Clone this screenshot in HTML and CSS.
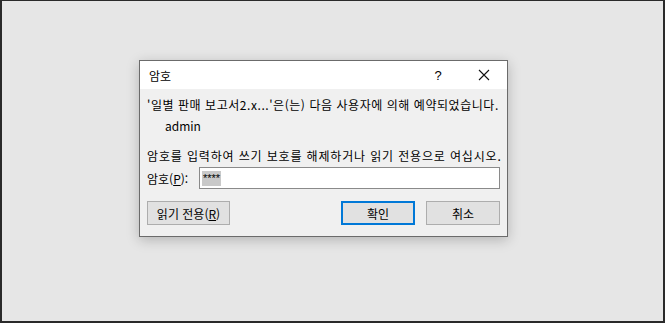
FILE: index.html
```html
<!DOCTYPE html>
<html lang="ko">
<head>
    <meta charset="UTF-8">
    <title>암호</title>
    <link rel="stylesheet" href="styles.css">
</head>
<body>
    <div class="dialog">
        <div class="titlebar">
            <span class="title">암호</span>
            <span class="help">?</span>
            <span class="close">
                <svg width="12" height="12" viewBox="0 0 12 12"><path d="M1 1L11 11M11 1L1 11" stroke="#111" stroke-width="1.1" fill="none"/></svg>
            </span>
        </div>
        <div class="content">
            <div class="line notice">'일별 판매 보고서2.x...'은(는) 다음 사용자에 의해 예약되었습니다.</div>
            <div class="line user">admin</div>
            <div class="line prompt">암호를 입력하여 쓰기 보호를 해제하거나 읽기 전용으로 여십시오.</div>
            <div class="pw-row">
                <label class="pw-label">암호(<u>P</u>):</label>
                <div class="pw-field"><span class="sel">****</span></div>
            </div>
            <div class="buttons">
                <button class="btn wide">읽기 전용(<u>R</u>)</button>
                <div class="spacer"></div>
                <button class="btn default">확인</button>
                <button class="btn">취소</button>
            </div>
        </div>
    </div>
</body>
</html>
```

FILE: styles.css
```css
html, body {
    margin: 0;
    padding: 0;
}

body {
    width: 665px;
    height: 323px;
    box-sizing: border-box;
    background-color: #e6e6e6;
    border-top: 1px solid #2a2a2a;
    border-left: 2px solid #2a2a2a;
    border-right: 2px solid #2a2a2a;
    border-bottom: 2px solid #2a2a2a;
    padding: 59px 0 0 137px;
    font-family: "Noto Sans CJK KR", "Noto Sans", sans-serif;
    font-size: 12px;
    color: #000;
}

.dialog {
    width: 369px;
    height: 177px;
    box-sizing: border-box;
    border: 1px solid #6b6b6b;
    background-color: #f0f0f0;
    box-shadow: 0 3px 12px rgba(0, 0, 0, 0.22);
    display: flex;
    flex-direction: column;
}

.titlebar {
    height: 28px;
    background-color: #fff;
    display: flex;
    align-items: center;
    padding-left: 9px;
}

.title {
    flex: 1;
}

.help {
    width: 46px;
    text-align: center;
    font-family: "Liberation Sans", sans-serif;
    font-size: 13px;
}

.close {
    width: 46px;
    display: flex;
    justify-content: center;
}

.content {
    padding: 8px 7px 0 7px;
}

.line {
    line-height: 16px;
    height: 16px;
    white-space: nowrap;
}

.notice {
    letter-spacing: 0.55px;
}

.user {
    margin-top: 5px;
    padding-left: 18px;
}

.prompt {
    margin-top: 14px;
    letter-spacing: 0.85px;
}

.pw-row {
    display: flex;
    align-items: center;
    margin-top: 3px;
}

.pw-label {
    width: 52px;
}

.pw-field {
    flex: 1;
    height: 22px;
    box-sizing: border-box;
    border: 1px solid #8a8a8a;
    background-color: #fff;
    display: flex;
    align-items: center;
    padding-left: 2px;
}

.sel {
    background-color: #c9c9c9;
    font-family: "Liberation Sans", sans-serif;
    font-size: 11px;
    line-height: 15px;
    padding: 0 1px;
}

.buttons {
    display: flex;
    margin-top: 12px;
    gap: 11px;
}

.spacer {
    flex: 1;
}

.btn {
    font-family: inherit;
    font-size: 12px;
    height: 24px;
    width: 74px;
    padding: 0;
    box-sizing: border-box;
    border: 1px solid #adadad;
    background-color: #e1e1e1;
    color: #000;
}

.btn.wide {
    width: 83px;
}

.btn.default {
    border: 2px solid #0078d7;
}
```
